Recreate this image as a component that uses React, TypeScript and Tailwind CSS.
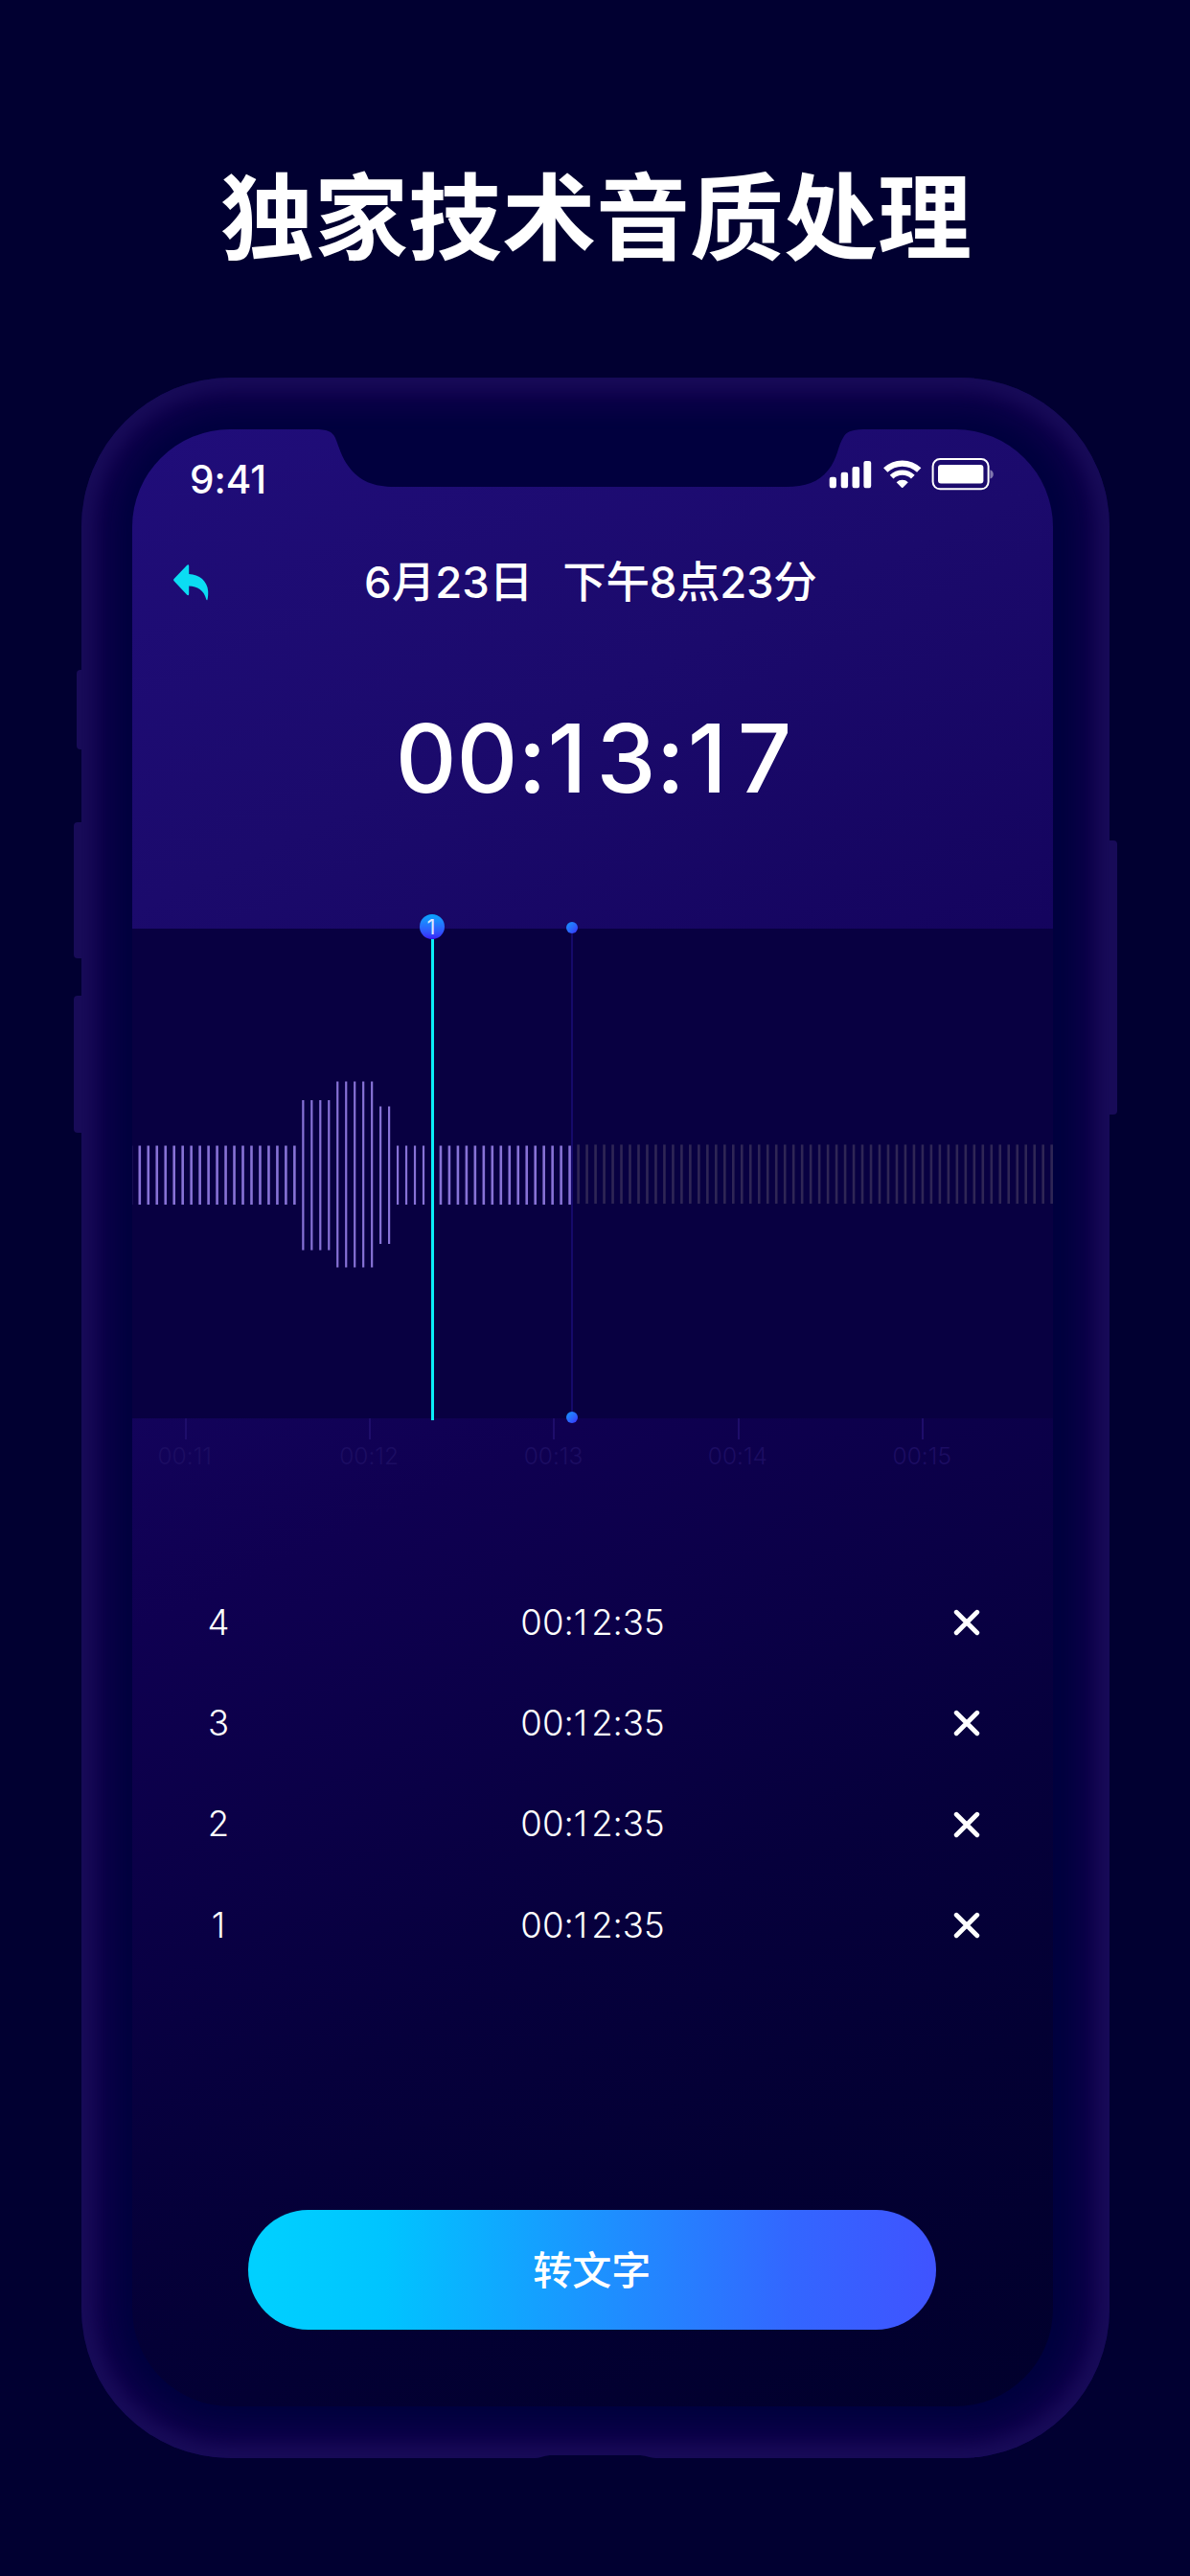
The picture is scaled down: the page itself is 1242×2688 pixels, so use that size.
const records = [4, 3, 2, 1];

const ticks = ["00:11", "00:12", "00:13", "00:14", "00:15"];

/* Waveform coordinates are relative to the panel's top-left corner. */
function barRange(i: number): [number, number] {
  if (i >= 19 && i <= 22) return [179, 335.5];
  if (i >= 23 && i <= 27) return [159.5, 353.5];
  if (i === 28 || i === 29) return [185.5, 329];
  return [226.5, 288];
}

const playedBars = Array.from({ length: 52 }, (_, k) => k - 1)
  .filter((i) => i !== 34)
  .map((i) => ({ x: 7.8 + i * 8.976, range: barRange(i), wide: i < 19 || i > 34 }));

const pendingBars = Array.from({ length: 56 }, (_, i) => 465.6 + i * 8.983);

function StatusIcons() {
  return (
    <svg className="block h-[34px] w-[172px]" viewBox="0 0 172 34" fill="#fff">
      <rect x="0.7" y="19.7" width="7.2" height="11.5" rx="2.2" />
      <rect x="12.7" y="14.7" width="7.4" height="16.5" rx="2.2" />
      <rect x="24.5" y="8.9" width="7.6" height="22.3" rx="2.2" />
      <rect x="36.4" y="2.9" width="7.8" height="28.3" rx="2.2" />
      <g fill="none" stroke="#fff">
        <path d="M59.2 12.6A25.2 25.2 0 0 1 94.2 12.6" strokeWidth="6.2" />
        <path d="M65.6 19.6A16 16 0 0 1 87.8 19.6" strokeWidth="5.4" />
      </g>
      <path d="M70.6 25.2A9 9 0 0 1 82.8 25.2L77.4 30.8Q76.7 31.4 76 30.8Z" />
      <rect x="108.6" y="1.1" width="58" height="31.2" rx="7.5" fill="none" stroke="#fff" strokeWidth="2" />
      <rect x="114" y="7" width="47.4" height="19.6" rx="3" />
      <path d="M168.4 12.2Q171.8 13.6 171.8 16.9T168.4 21.6Z" opacity="0.45" />
    </svg>
  );
}

function BackArrow() {
  return (
    <svg className="block h-[38px] w-[37px]" viewBox="0 0 37 38" fill="#0bdcf3">
      <path d="M0.6 17.3Q-0.4 16.2 0.6 15.1L14.2 0.8Q16 -0.5 16.2 1.6V10C27 10.6 35.5 17 36.2 28C36.3 32 36 35.5 35.3 37.2Q34.7 37.6 34.3 36.6C32 27 25 22.8 16.2 22.6V31Q15.8 33 14.2 31.8Z" />
    </svg>
  );
}

function CloseIcon() {
  return (
    <svg className="block h-[28px] w-[28px]" viewBox="0 0 28 28" stroke="#fff" strokeWidth="4.8" strokeLinecap="round">
      <path d="M3.2 3.2L24.8 24.8M24.8 3.2L3.2 24.8" />
    </svg>
  );
}

function Waveform() {
  return (
    <svg className="block h-[512px] w-[961px]" viewBox="0 0 961 512">
      {pendingBars.map((x) => (
        <rect key={x} x={x - 1.3} y="225.4" width="2.6" height="61.6" fill="#2f2655" />
      ))}
      {playedBars.map(({ x, range, wide }) => (
        <rect
          key={x}
          x={x - (wide ? 1.3 : 1.1)}
          y={range[0]}
          width={wide ? 2.6 : 2.2}
          height={range[1] - range[0]}
          fill="#8772d6"
        />
      ))}
    </svg>
  );
}

function PlayedMarker() {
  return (
    <div className="absolute -top-[7px] left-[453px] flex h-[523px] w-3 flex-col items-center justify-between">
      <span className="h-3 w-3 rounded-full bg-linear-to-br from-[#1098fd] to-[#3a22fb]" />
      <span className="w-[2.5px] flex-1 bg-[#15096a]" />
      <span className="h-3 w-3 rounded-full bg-linear-to-br from-[#1098fd] to-[#3a22fb]" />
    </div>
  );
}

function Bookmark() {
  return (
    <div className="absolute -top-[15px] left-[300px] flex h-[528px] w-[26px] flex-col items-center">
      <span className="flex h-[26px] w-[26px] items-center justify-center rounded-full bg-linear-to-b from-[#05a5ff] to-[#3a16fa] pr-[2px] text-[22px] leading-none text-[#dfe6ff]">
        1
      </span>
      <span className="w-[3px] flex-1 bg-[#0aeef8]" />
    </div>
  );
}

export default function App() {
  return (
    <main className="flex h-[2688px] w-[1242px] flex-col items-start overflow-hidden bg-[#010031] font-['Inter','Noto_Sans_CJK_SC',sans-serif] text-white [font-feature-settings:'calt'_0]">
      <h1 className="h-[394px] w-full shrink-0 pt-[171px] pl-[2px] text-center font-['Noto_Sans_CJK_SC',sans-serif] text-[98px] leading-[98px] font-bold">
        独家技术音质处理
      </h1>

      <div className="relative ml-[85px] h-[2171px] w-[1073px] shrink-0">
        <span className="absolute top-[305px] -left-[5px] h-[83px] w-4 rounded-l-[4px] bg-[#180b58]" />
        <span className="absolute top-[464px] -left-[8px] h-[142px] w-4 rounded-l-[4px] bg-[#180b58]" />
        <span className="absolute top-[645px] -left-[8px] h-[143px] w-4 rounded-l-[4px] bg-[#180b58]" />
        <span className="absolute top-[483px] -right-[8px] h-[286px] w-4 rounded-r-[4px] bg-[#180b58]" />

        <div className="relative h-full rounded-[156px] bg-[#01003e] pt-[54px] pr-[59px] pl-[53px] shadow-[inset_0_0_15px_13px_#180b58,inset_0_0_28px_31px_#0f004c]">
          <section className="relative flex h-[2063px] w-[961px] flex-col overflow-hidden rounded-[102px] bg-[linear-gradient(155deg,#200d7a_0%,#1b0a6c_20%,#14045e_38%,#0f0051_50%,#0a0046_62%,#06003c_72%,#030033_84%,#01002c_100%)]">
            <svg className="absolute top-0 left-[190px] h-[61px] w-[578px]" viewBox="0 0 578 61" fill="#01003e">
              <path d="M0 0C14 0 18.5 2 22 9C26 19 29 30 36 39C47 54 62 60 84 60H492C513 60 526 55 536 43C547 30 546 17 553 7C557 1.5 563 0 578 0Z" />
            </svg>

            <div className="relative flex h-[106px] shrink-0 items-center justify-between pr-[62px] pl-[60px]">
              <span className="text-[40.5px] leading-none font-medium">9:41</span>
              <span className="-mt-[13px]">
                <StatusIcons />
              </span>
            </div>

            <div className="flex h-[108px] shrink-0 items-center">
              <button className="ml-[43px]">
                <BackArrow />
              </button>
              <div className="ml-[162px] flex gap-[31px] text-[45.5px] leading-none font-medium whitespace-nowrap">
                <span>6月23日</span>
                <span className="tracking-[-0.3px]">下午8点23分</span>
              </div>
            </div>

            <div className="flex h-[307px] shrink-0 items-center justify-center pb-[48px]">
              <time className="pl-[2px] text-[99px] leading-none font-medium">
                00:<span className="pr-[10px] pl-[1px]">1</span>3:<span className="pr-[11px] pl-[3px]">1</span>7
              </time>
            </div>

            <div className="relative h-[511px] shrink-0 bg-[#080041]">
              <Waveform />
              <PlayedMarker />
              <Bookmark />
            </div>

            <div className="flex h-[120px] shrink-0">
              {ticks.map((label, i) => (
                <div
                  key={label}
                  className={
                    i === 0
                      ? "-ml-[40.5px] flex w-[192.4px] shrink-0 flex-col items-center"
                      : "flex w-[192.4px] shrink-0 flex-col items-center"
                  }
                >
                  <span className="h-[22px] w-[2px] bg-[#1e0d6a]" />
                  <span className="mt-[4px] pr-0.5 text-[24.5px] leading-[26px] font-light text-[#1c0d62]">{label}</span>
                </div>
              ))}
            </div>

            <ul className="mt-[40.5px] shrink-0">
              {records.map((id) => (
                <li
                  key={id}
                  className="flex h-[105.3px] items-center justify-between pr-[76px] pl-[74px] text-[36.5px] leading-none font-light"
                >
                  <span className="w-[32px] text-center">{id}</span>
                  <time className="pr-[2px]">
                    00:<span className="pr-[4px]">1</span>2:35
                  </time>
                  <button>
                    <CloseIcon />
                  </button>
                </li>
              ))}
            </ul>

            <button className="mt-[244px] ml-[120.5px] flex h-[125.5px] w-[718.5px] shrink-0 items-center justify-center rounded-full bg-[linear-gradient(91deg,#00d0ff_2%,#00c4ff_20%,#1f8dff_54%,#3366ff_79%,#3f54ff_99%)] pb-[4px] font-['Noto_Sans_CJK_SC',sans-serif] text-[41px] leading-none font-medium">
              转文字
            </button>
          </section>
        </div>

        <svg className="absolute bottom-0 left-[474px] h-[4px] w-[126px]" viewBox="0 0 126 4" fill="#010031">
          <path d="M0 4C8 3.5 8 1 18 1H106C116 1 116 3.5 126 4Z" />
        </svg>
      </div>
    </main>
  );
}
